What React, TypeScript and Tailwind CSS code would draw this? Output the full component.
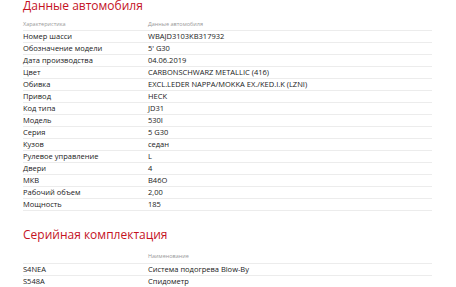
const specs = [
  ["Номер шасси", "WBAJD3103KB317932"],
  ["Обозначение модели", "5' G30"],
  ["Дата производства", "04.06.2019"],
  ["Цвет", "CARBONSCHWARZ METALLIC (416)"],
  ["Обивка", "EXCL.LEDER NAPPA/MOKKA EX./KED.I.K (LZNI)"],
  ["Привод", "HECK"],
  ["Код типа", "JD31"],
  ["Модель", "530I"],
  ["Серия", "5 G30"],
  ["Кузов", "седан"],
  ["Рулевое управление", "L"],
  ["Двери", "4"],
  ["МКВ", "B46O"],
  ["Рабочий объем", "2,00"],
  ["Мощность", "185"],
];

const equipment = [
  ["S4NEA", "Система подогрева Blow-By"],
  ["S548A", "Спидометр"],
];

function Row({ a, b }: { a: string; b: string }) {
  return (
    <div className="grid h-3 grid-cols-[125px_1fr] items-center border-b border-[#ececec] text-[7.5px] leading-none text-[#1a1a1a]">
      <div>{a}</div>
      <div>{b}</div>
    </div>
  );
}

export default function App() {
  return (
    <div
      className="h-[287px] w-[456px] overflow-hidden bg-white pl-[23px] pr-6"
      style={{ fontFamily: '"Open Sans", sans-serif' }}
    >
      <h2 className="mt-[-2px] text-[12px] leading-[15px] text-[#c4121f]">Данные автомобиля</h2>
      <div className="mt-[6px] w-[409px]">
        <div className="grid h-3 grid-cols-[125px_1fr] items-center border-b border-[#ececec] text-[5.5px] text-[#999]">
          <div>Характеристика</div>
          <div>Данные автомобиля</div>
        </div>
        {specs.map(([a, b]) => (
          <Row key={a} a={a} b={b} />
        ))}
      </div>

      <h2 className="mt-[16px] text-[12px] leading-[15px] text-[#c4121f]">Серийная комплектация</h2>
      <div className="mt-[8px] w-[409px]">
        <div className="grid h-[14px] grid-cols-[125px_1fr] items-center border-b border-[#ececec] text-[5.5px] text-[#999]">
          <div></div>
          <div>Наименование</div>
        </div>
        {equipment.map(([a, b]) => (
          <Row key={a} a={a} b={b} />
        ))}
      </div>
    </div>
  );
}
